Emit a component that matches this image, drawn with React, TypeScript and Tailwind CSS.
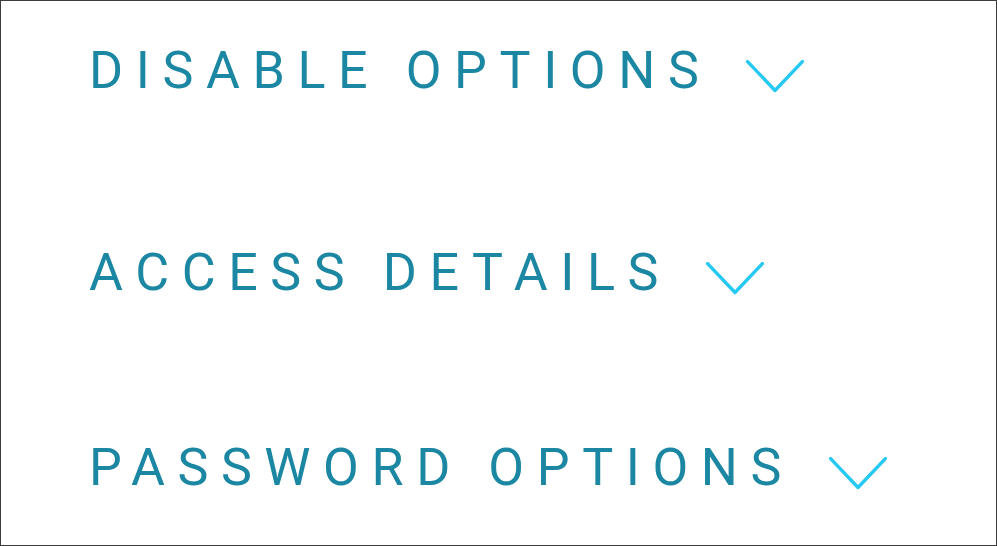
import React from "react";

function Chevron() {
  return (
    <svg width="58" height="33" viewBox="0 0 58 33" className="shrink-0 text-[#25c9f3]">
      <polyline points="1.6,1.6 29,30.5 56.4,1.6" fill="none" stroke="currentColor" strokeWidth="3.4" strokeLinecap="round" strokeLinejoin="round" />
    </svg>
  );
}

function Row({ label, className }: { label: string; className?: string }) {
  return (
    <div className={"flex items-center " + (className ?? "")}>
      <span className="text-[52px] leading-none tracking-[12.6px] text-[#1c87a3] uppercase" style={{ fontFamily: "Roboto, 'Noto Sans', sans-serif" }}>
        {label}
      </span>
      <span className="ml-[35px] mt-[11px] flex">
        <Chevron />
      </span>
    </div>
  );
}

export default function App() {
  return (
    <div className="w-[997px] h-[546px] bg-white border border-[#3c3c3c] box-border overflow-hidden">
      <div className="flex flex-col pl-[88px] pt-[44px]">
        <Row label="Disable Options" />
        <Row label="Access Details" className="mt-[150px]" />
        <Row label="Password Options" className="mt-[143px]" />
      </div>
    </div>
  );
}
